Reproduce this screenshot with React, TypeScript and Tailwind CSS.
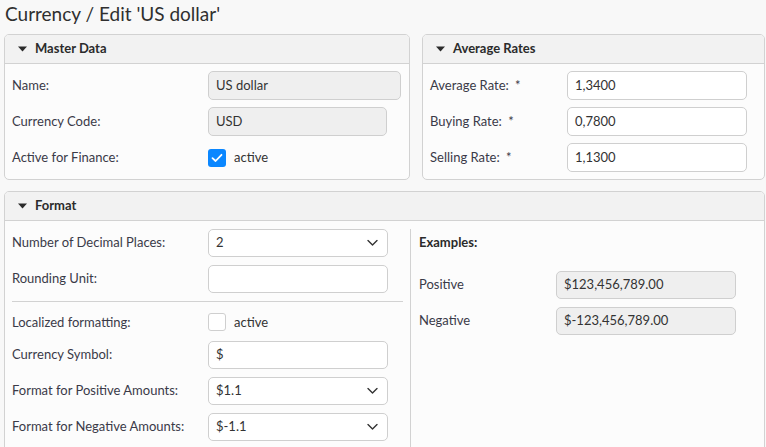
import React from 'react'

const font = { fontFamily: 'Lato, "Noto Sans", sans-serif' }

function Caret() {
  return (
    <svg width="9" height="6" viewBox="0 0 9 6" className="mr-[8px]">
      <path d="M0 0.5 L9 0.5 L4.5 5.5 Z" fill="#2b2b2b" />
    </svg>
  )
}

function Chevron() {
  return (
    <svg width="11" height="7" viewBox="0 0 11 7" className="absolute right-[9px] top-1/2 -translate-y-1/2">
      <path d="M1 1 L5.5 5.5 L10 1" fill="none" stroke="#333" strokeWidth="1.4" strokeLinecap="round" strokeLinejoin="round" />
    </svg>
  )
}

function PanelHeader({ title }: { title: string }) {
  return (
    <div className="flex h-[29px] items-center border-b border-[#d2d2d2] bg-[#f2f2f2] pl-[13px] text-[13px] font-bold text-[#2b2b2b]">
      <Caret />
      {title}
    </div>
  )
}

function Field({
  value,
  readOnly,
  select,
  width,
  height = 'h-[29px]',
}: {
  value: string
  readOnly?: boolean
  select?: boolean
  width: string
  height?: string
}) {
  return (
    <div
      className={`relative flex items-center rounded-[5px] border border-[#cfcfcf] pl-[7px] text-[13px] text-[#333] ${width} ${height} ${
        readOnly ? 'bg-[#efefef]' : 'bg-white'
      }`}
    >
      {value}
      {select ? <Chevron /> : null}
    </div>
  )
}

function Check({ checked }: { checked: boolean }) {
  return (
    <div className="flex items-center">
      {checked ? (
        <div className="flex h-[18px] w-[18px] items-center justify-center rounded-[3px] bg-[#0b87ff]">
          <svg width="12" height="10" viewBox="0 0 12 10">
            <path d="M1.5 5.2 L4.6 8 L10.5 1.8" fill="none" stroke="#fff" strokeWidth="1.8" strokeLinecap="round" strokeLinejoin="round" />
          </svg>
        </div>
      ) : (
        <div className="h-[18px] w-[18px] rounded-[3px] border border-[#cfcfcf] bg-white" />
      )}
      <span className="ml-[8px] text-[13px] text-[#333]">active</span>
    </div>
  )
}

function Row({ label, children, labelWidth = 'w-[196px]', h = 'h-[29px]' }: { label: React.ReactNode; children: React.ReactNode; labelWidth?: string; h?: string }) {
  return (
    <div className={`flex items-center ${h}`}>
      <div className={`${labelWidth} shrink-0 text-[13px] text-[#3a3a48]`}>{label}</div>
      {children}
    </div>
  )
}

function Req({ text }: { text: string }) {
  return (
    <span>
      {text} <span className="ml-[3px]">*</span>
    </span>
  )
}

export default function App() {
  return (
    <main style={font} className="h-[447px] w-[766px] overflow-hidden bg-[#f8f8f8] pl-[4px] pr-[1px]">
      <h1 className="flex h-[34px] items-center pb-[6px] pl-[1px] text-[19px] font-normal text-[#2f2f2f]">
        Currency / Edit 'US dollar'
      </h1>

      <div className="flex gap-[12px]">
        <section className="h-[146px] w-[406px] overflow-hidden rounded-[5px] border border-[#d2d2d2] bg-[#fcfcfc]">
          <PanelHeader title="Master Data" />
          <div className="flex flex-col gap-[7px] pl-[7px] pt-[7px]">
            <Row label="Name:">
              <Field value="US dollar" readOnly width="w-[193px]" />
            </Row>
            <Row label="Currency Code:">
              <Field value="USD" readOnly width="w-[179px]" />
            </Row>
            <Row label="Active for Finance:">
              <Check checked />
            </Row>
          </div>
        </section>

        <section className="h-[146px] flex-1 overflow-hidden rounded-[5px] border border-[#d2d2d2] bg-[#fcfcfc]">
          <PanelHeader title="Average Rates" />
          <div className="flex flex-col gap-[7px] pl-[7px] pt-[7px]">
            <Row label={<Req text="Average Rate:" />} labelWidth="w-[137px]">
              <Field value="1,3400" width="w-[180px]" />
            </Row>
            <Row label={<Req text="Buying Rate:" />} labelWidth="w-[137px]">
              <Field value="0,7800" width="w-[180px]" />
            </Row>
            <Row label={<Req text="Selling Rate:" />} labelWidth="w-[137px]">
              <Field value="1,1300" width="w-[180px]" />
            </Row>
          </div>
        </section>
      </div>

      <section className="mt-[11px] h-[300px] overflow-hidden rounded-t-[5px] border border-[#d2d2d2] bg-[#fcfcfc]">
        <PanelHeader title="Format" />
        <div className="flex pt-[8px]">
          <div className="flex w-[406px] flex-col gap-[8px] border-r border-[#d2d2d2] pl-[7px] pr-[7px]">
            <Row label="Number of Decimal Places:" h="h-[28px]">
              <Field value="2" select width="w-[180px]" height="h-[28px]" />
            </Row>
            <Row label="Rounding Unit:" h="h-[28px]">
              <Field value="" width="w-[180px]" height="h-[28px]" />
            </Row>
            <div className="flex h-[32px] flex-col justify-between pb-[1px]">
              <div className="h-px w-full bg-[#d2d2d2]" />
              <div className="flex items-center">
                <div className="w-[196px] shrink-0 text-[13px] text-[#3a3a48]">Localized formatting:</div>
                <Check checked={false} />
              </div>
            </div>
            <Row label="Currency Symbol:" h="h-[28px]">
              <Field value="$" width="w-[180px]" height="h-[28px]" />
            </Row>
            <Row label="Format for Positive Amounts:" h="h-[28px]">
              <Field value="$1.1" select width="w-[180px]" height="h-[28px]" />
            </Row>
            <Row label="Format for Negative Amounts:" h="h-[28px]">
              <Field value="$-1.1" select width="w-[180px]" height="h-[28px]" />
            </Row>
            <div className="h-[40px]" />
          </div>

          <div className="flex flex-1 flex-col pl-[8px]">
            <div className="flex h-[28px] items-center text-[13px] font-bold text-[#2b2b2b]">Examples:</div>
            <div className="mt-[14px] flex flex-col gap-[8px]">
              <Row label="Positive" labelWidth="w-[137px]" h="h-[28px]">
                <Field value="$123,456,789.00" readOnly width="w-[180px]" height="h-[28px]" />
              </Row>
              <Row label="Negative" labelWidth="w-[137px]" h="h-[28px]">
                <Field value="$-123,456,789.00" readOnly width="w-[180px]" height="h-[28px]" />
              </Row>
            </div>
          </div>
        </div>
      </section>
    </main>
  )
}
